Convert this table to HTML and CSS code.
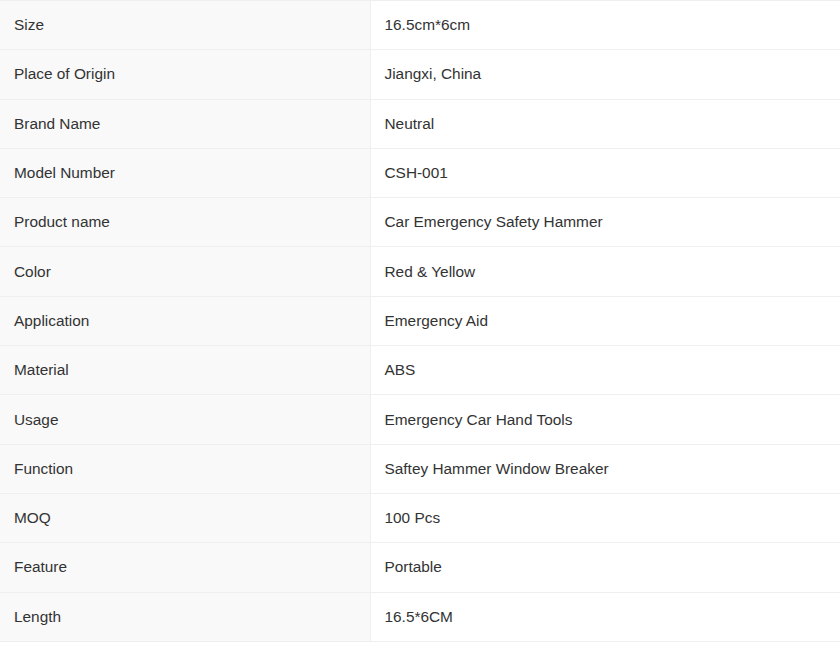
FILE: index.html
```html
<!DOCTYPE html>
<html>
<head>
<meta charset="utf-8">
<link rel="stylesheet" href="styles.css">
</head>
<body>
<table class="spec">
<tbody>
<tr><td class="k">Size</td><td class="v">16.5cm*6cm</td></tr>
<tr><td class="k">Place of Origin</td><td class="v">Jiangxi, China</td></tr>
<tr><td class="k">Brand Name</td><td class="v">Neutral</td></tr>
<tr><td class="k">Model Number</td><td class="v">CSH-001</td></tr>
<tr><td class="k">Product name</td><td class="v">Car Emergency Safety Hammer</td></tr>
<tr><td class="k">Color</td><td class="v">Red &amp; Yellow</td></tr>
<tr><td class="k">Application</td><td class="v">Emergency Aid</td></tr>
<tr><td class="k">Material</td><td class="v">ABS</td></tr>
<tr><td class="k">Usage</td><td class="v">Emergency Car Hand Tools</td></tr>
<tr><td class="k">Function</td><td class="v">Saftey Hammer Window Breaker</td></tr>
<tr><td class="k">MOQ</td><td class="v">100 Pcs</td></tr>
<tr><td class="k">Feature</td><td class="v">Portable</td></tr>
<tr><td class="k">Length</td><td class="v">16.5*6CM</td></tr>
</tbody>
</table>
</body>
</html>
```
FILE: styles.css
```css
html, body {
  margin: 0;
  padding: 0;
  background: #ffffff;
}
.spec {
  width: 840px;
  border-collapse: collapse;
  table-layout: fixed;
  font-family: "Liberation Sans", Arial, sans-serif;
  font-size: 15.4px;
  color: #333333;
}
.spec td {
  border: 1px solid #efefef;
  height: 49.3px;
  box-sizing: border-box;
  padding: 0 14px;
  vertical-align: middle;
  line-height: 20px;
}
.spec .k {
  width: 370px;
  background: #f9f9f9;
  border-left: none;
}
.spec .v {
  background: #ffffff;
  border-right: none;
}
```
